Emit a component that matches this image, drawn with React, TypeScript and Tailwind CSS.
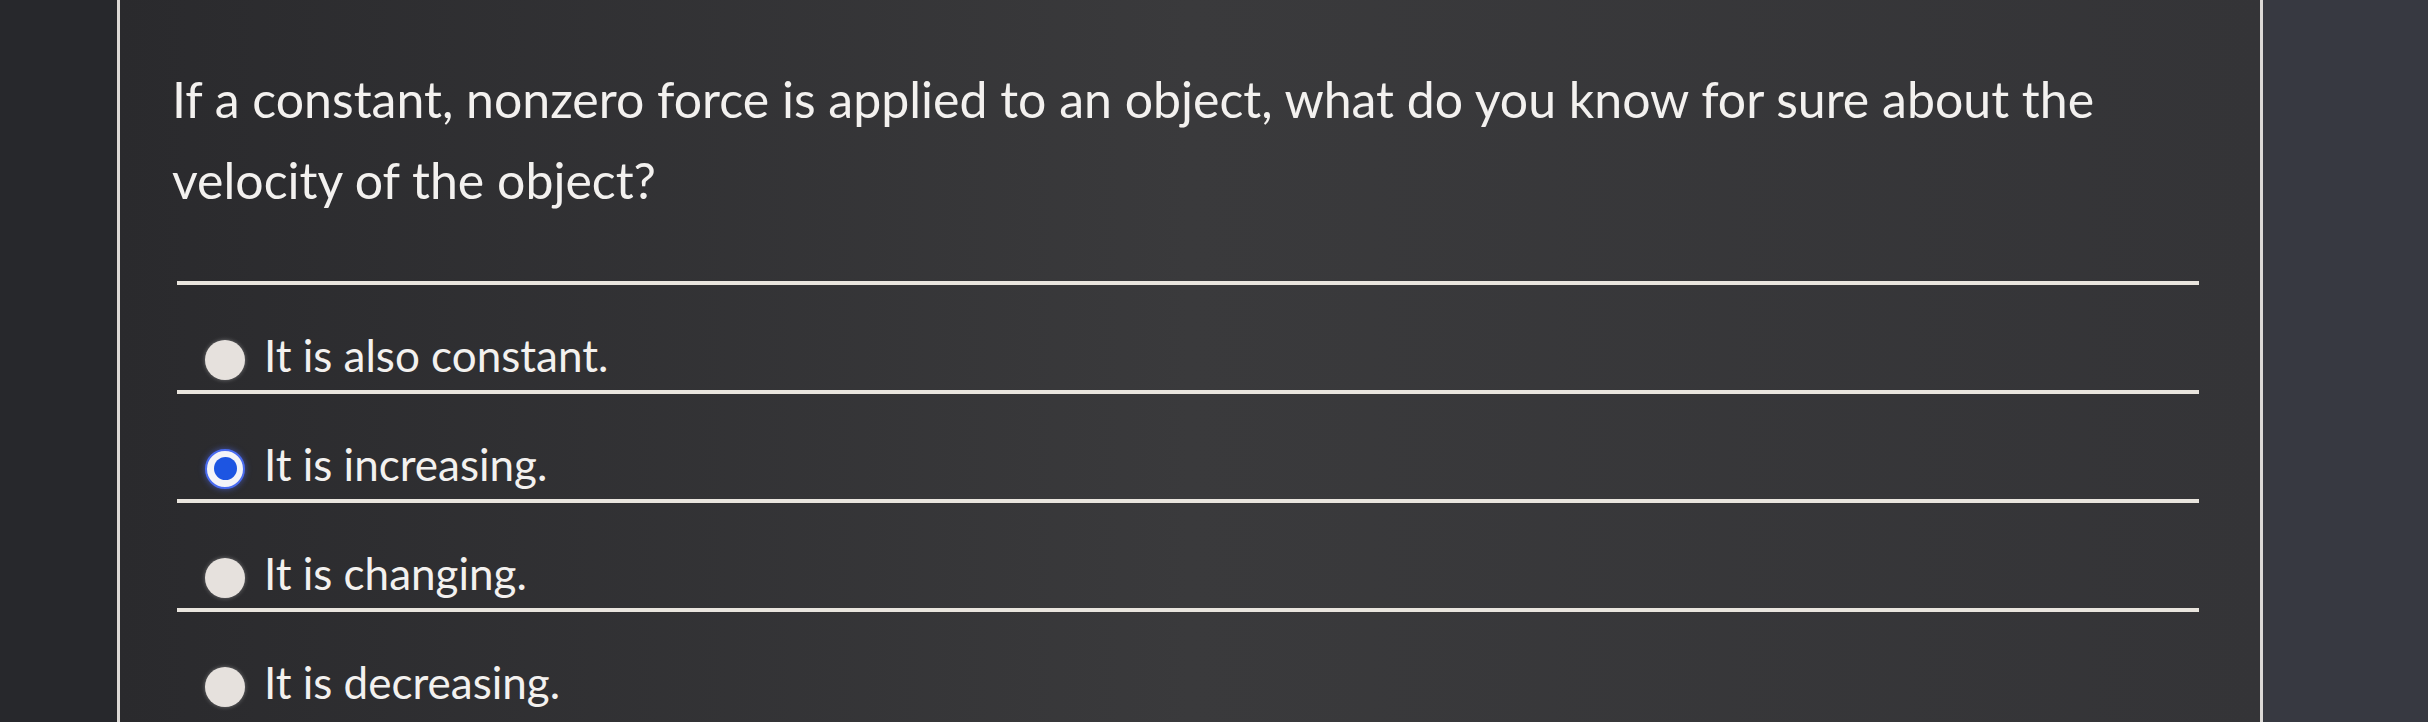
import { useState } from "react";

interface Choice {
  id: string;
  label: string;
}

const question =
  "If a constant, nonzero force is applied to an object, what do you know for sure about the velocity of the object?";

const choices: Choice[] = [
  { id: "constant", label: "It is also constant." },
  { id: "increasing", label: "It is increasing." },
  { id: "changing", label: "It is changing." },
  { id: "decreasing", label: "It is decreasing." },
];

function RadioDot({ checked }: { checked: boolean }) {
  if (checked) {
    return (
      <span className="mt-[10px] flex h-10 w-10 shrink-0 items-center justify-center rounded-full border-2 border-[#4a6cf0] bg-[#f4f4f8] shadow-[0_0_6px_rgba(80,110,255,0.6)]">
        <span className="h-[23px] w-[23px] rounded-full bg-[#1d55e2]" />
      </span>
    );
  }
  return (
    <span className="mt-[10px] h-10 w-10 shrink-0 rounded-full bg-[#e6e1dd] shadow-[0_0_4px_rgba(255,255,255,0.35)]" />
  );
}

function ChoiceRow({
  choice,
  checked,
  onSelect,
}: {
  choice: Choice;
  checked: boolean;
  onSelect: () => void;
}) {
  return (
    <label
      onClick={onSelect}
      className="flex h-[109px] shrink-0 cursor-pointer items-center gap-[19px] border-t-4 border-[#e9e5de] pt-[34px] pl-[28px]"
    >
      <RadioDot checked={checked} />
      <span className="text-[44px] leading-none text-[#f3f1ef]">{choice.label}</span>
    </label>
  );
}

export default function App() {
  const [selected, setSelected] = useState("increasing");

  return (
    <div className="flex h-[722px] w-full overflow-hidden bg-[#27282c] font-['Lato','Noto_Sans',sans-serif]">
      <div className="w-[117px] shrink-0" />
      <main className="flex w-[2146px] shrink-0 flex-col border-x-[3px] border-[#dcd9d6] bg-gradient-to-r from-[#2a2a2d] via-[#3a3a3c] to-[#343437] pt-[59px] pr-[61px] pl-[57px]">
        <p className="-ml-[5px] text-[50px] leading-[81px] text-[#f3f1ef]">{question}</p>
        <div className="mt-[60px] flex flex-col">
          {choices.map((choice) => (
            <ChoiceRow
              key={choice.id}
              choice={choice}
              checked={selected === choice.id}
              onSelect={() => setSelected(choice.id)}
            />
          ))}
        </div>
      </main>
      <div className="flex-1 bg-[#373941]" />
    </div>
  );
}
